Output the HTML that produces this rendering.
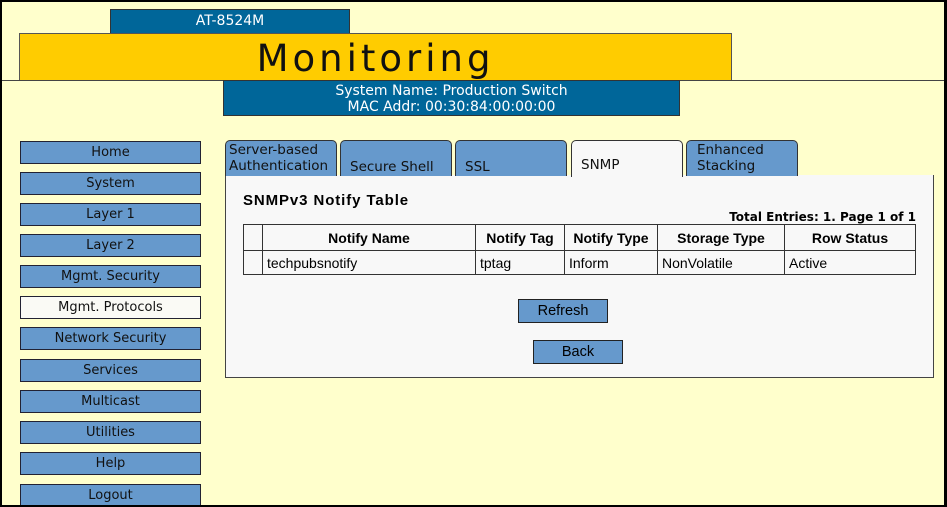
<!DOCTYPE html>
<html><head><style>
body{margin:0;width:947px;height:507px;overflow:hidden;background:#ffffcc;font-family:"DejaVu Sans","Liberation Sans",sans-serif;}
.a{position:absolute;box-sizing:border-box}
#frame{left:0;top:0;width:947px;height:507px;border:2px solid #000;border-right-width:3px}
.nav{left:20px;width:181px;height:23px;background:#6699cc;border:1px solid #223;font-size:13px;text-align:center;line-height:21px;color:#111}
.tab{top:140px;height:36px;width:112px;background:#6699cc;border:1px solid #333;border-bottom:none;border-radius:5px 5px 0 0;font-size:13.5px;line-height:16px;padding:1px 3px;color:#111}
table{border-collapse:collapse;font-family:"Liberation Sans",sans-serif;font-size:14px}
td,th{border:1px solid #333;padding:0 4px}
th{height:25px;text-align:center}
td{height:23px}
.btn{background:#6699cc;border:1px solid #222;font-family:"Liberation Sans",sans-serif;font-size:14.5px;text-align:center;line-height:22px;width:90px;height:24px}
</style></head><body>
<div class="a" style="left:110px;top:9px;width:240px;height:25px;background:#006699;border:1px solid #333;color:#fff;font-size:14px;text-align:center;line-height:23px">AT-8524M</div>
<div class="a" style="left:19px;top:33px;width:713px;height:48px;background:#ffcc00;border:1px solid #555;font-size:37px;letter-spacing:4px;text-align:center;line-height:50px;color:#111;padding-right:botton">Monitoring</div>
<div class="a" style="left:0;top:80px;width:947px;height:1px;background:#444"></div>
<div class="a" style="left:223px;top:80px;width:457px;height:36px;background:#006699;border:1px solid #333;color:#fff;font-size:14px;text-align:center;line-height:16px;padding-top:2px">System Name: Production Switch<br>MAC Addr: 00:30:84:00:00:00</div>

<div class="a nav" style="top:141px">Home</div>
<div class="a nav" style="top:172px">System</div>
<div class="a nav" style="top:203px">Layer 1</div>
<div class="a nav" style="top:234px">Layer 2</div>
<div class="a nav" style="top:265px">Mgmt. Security</div>
<div class="a nav" style="top:296px;background:#fafaf5">Mgmt. Protocols</div>
<div class="a nav" style="top:327px">Network Security</div>
<div class="a nav" style="top:359px">Services</div>
<div class="a nav" style="top:390px">Multicast</div>
<div class="a nav" style="top:421px">Utilities</div>
<div class="a nav" style="top:452px">Help</div>
<div class="a nav" style="top:484px">Logout</div>

<div class="a" style="left:225px;top:175px;width:709px;height:203px;background:#f8f8f8;border:1px solid #444;border-top:none"></div>
<div class="a tab" style="left:225px">Server-based<br>Authentication</div>
<div class="a tab" style="left:340px;padding-top:18px;padding-left:9px">Secure Shell</div>
<div class="a tab" style="left:455px;padding-top:18px;padding-left:9px">SSL</div>
<div class="a tab" style="left:571px;background:#f8f8f8;height:37px;padding-top:16px;padding-left:9px">SNMP</div>
<div class="a tab" style="left:686px;padding-left:10px">Enhanced<br>Stacking</div>

<div class="a" style="left:243px;top:192px;font-family:'Liberation Sans',sans-serif;font-weight:bold;font-size:15px;letter-spacing:0.9px">SNMPv3 Notify Table</div>
<div class="a" style="left:680px;top:210px;width:236px;text-align:right;font-weight:bold;font-size:12px">Total Entries: 1. Page 1 of 1</div>
<table class="a" style="left:243px;top:224px;width:673px">
<tr><th style="width:10px"></th><th style="width:204px">Notify Name</th><th style="width:80px">Notify Tag</th><th style="width:84px">Notify Type</th><th style="width:118px">Storage Type</th><th>Row Status</th></tr>
<tr><td></td><td>techpubsnotify</td><td>tptag</td><td>Inform</td><td>NonVolatile</td><td>Active</td></tr>
</table>
<div class="a btn" style="left:518px;top:299px">Refresh</div>
<div class="a btn" style="left:533px;top:340px">Back</div>
<div class="a" id="frame"></div>
</body></html>
